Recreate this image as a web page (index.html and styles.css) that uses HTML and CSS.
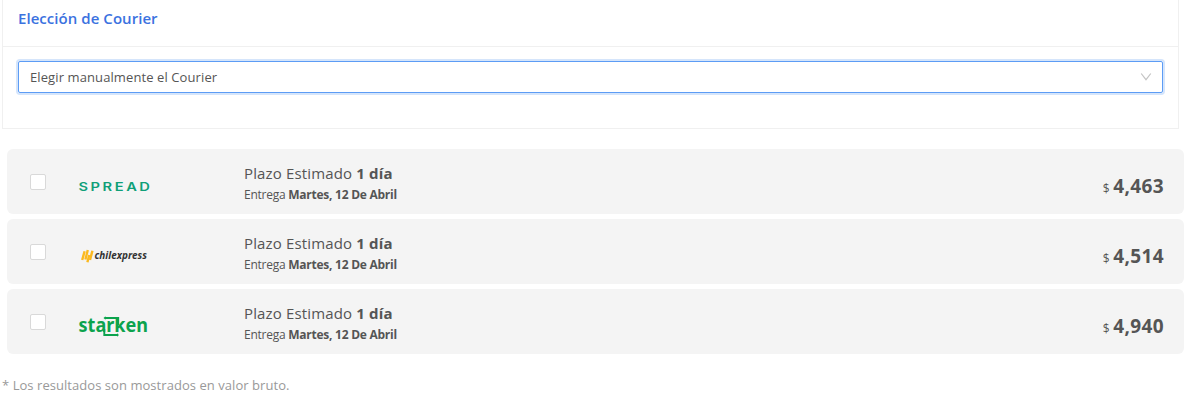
FILE: index.html
```html
<!DOCTYPE html>
<html lang="es">
<head>
    <meta charset="UTF-8">
    <meta name="viewport" content="width=device-width, initial-scale=1.0">
    <title>Elección de Courier</title>
    <link rel="stylesheet" href="styles.css">
</head>
<body>
    <section class="card">
        <h2 class="card-title">Elección de Courier</h2>
        <div class="card-body">
            <div class="select" role="combobox" tabindex="0">
                <span class="select-value">Elegir manualmente el Courier</span>
                <svg class="arrow" width="12" height="10" viewBox="0 0 12 10">
                    <path d="M1.2 1.5 L6 7.7 L10.8 1.5" fill="none" stroke="#c4c4c4" stroke-width="1.2"/>
                </svg>
            </div>
        </div>
    </section>

    <div class="couriers">
        <label class="courier">
            <input type="checkbox" class="check">
            <svg class="logo" width="80" height="30" viewBox="0 0 80 30">
                <text class="logo-spread" x="3.5" y="19.8" textLength="74" lengthAdjust="spacingAndGlyphs">SPREAD</text>
            </svg>
            <div class="info">
                <p class="plazo">Plazo Estimado <b>1 día</b></p>
                <p class="entrega">Entrega <b>Martes, 12 De Abril</b></p>
            </div>
            <div class="price"><small>$</small> <b>4,463</b></div>
        </label>
        <label class="courier">
            <input type="checkbox" class="check">
            <svg class="logo" width="80" height="30" viewBox="0 0 80 30">
                <g fill="none" stroke="#fbb91f" stroke-width="2.4">
                    <path d="M7.2 19 L9.6 10.3"/>
                    <path d="M10.4 18.5 L12.8 9"/>
                    <path d="M12.4 21.3 L14.2 14"/>
                    <path d="M15 19 L17.4 9.8"/>
                </g>
                <text class="logo-chilexpress" x="19.5" y="18.4" textLength="52.5" lengthAdjust="spacingAndGlyphs">chilexpress</text>
            </svg>
            <div class="info">
                <p class="plazo">Plazo Estimado <b>1 día</b></p>
                <p class="entrega">Entrega <b>Martes, 12 De Abril</b></p>
            </div>
            <div class="price"><small>$</small> <b>4,514</b></div>
        </label>
        <label class="courier">
            <input type="checkbox" class="check">
            <svg class="logo" width="80" height="30" viewBox="0 0 80 30">
                <text class="logo-starken" x="3.5" y="20.7" textLength="69.5" lengthAdjust="spacingAndGlyphs">starken</text>
                <path d="M30 7 H43.2 V14 M29.3 18 V24 H43" fill="none" stroke="#0ba34d" stroke-width="1.9"/>
                <path d="M30.5 5.2 L28.5 7 L30.5 8.8 Z M42 22.2 L44 24 L42 25.8 Z" fill="#0ba34d"/>
            </svg>
            <div class="info">
                <p class="plazo">Plazo Estimado <b>1 día</b></p>
                <p class="entrega">Entrega <b>Martes, 12 De Abril</b></p>
            </div>
            <div class="price"><small>$</small> <b>4,940</b></div>
        </label>
    </div>

    <p class="nota">* Los resultados son mostrados en valor bruto.</p>
</body>
</html>
```

FILE: styles.css
```css
* {
    box-sizing: border-box;
}

body {
    margin: 0;
    background-color: #fff;
    color: #555;
    font-family: 'Segoe UI', 'Open Sans', 'Noto Sans', sans-serif;
    font-size: 13px;
    overflow: hidden;
}

p, h2 {
    margin: 0;
}

.card {
    width: 1177px;
    height: 129px;
    margin-left: 2px;
    border: 1px solid #f0f0f0;
    border-top: none;
}

.card-title {
    height: 47px;
    padding: 7px 15px 0;
    border-bottom: 1px solid #f0f0f0;
    color: #3b72e0;
    font-size: 15px;
    font-weight: 600;
    line-height: 22px;
    letter-spacing: 0.05px;
}

.card-body {
    padding: 14px 15px;
}

.select {
    display: flex;
    align-items: center;
    justify-content: space-between;
    height: 32px;
    padding: 0 10px 0 11px;
    border: 1px solid #5c9cf5;
    border-radius: 2px;
    box-shadow: 0 0 0 2px #d5e5fb;
    outline: none;
}

.select-value {
    letter-spacing: 0.1px;
}

.couriers {
    display: flex;
    flex-direction: column;
    gap: 5px;
    width: 1177px;
    margin: 20px 0 0 7px;
}

.courier {
    display: flex;
    align-items: center;
    height: 65px;
    padding: 0 20px 0 23px;
    border-radius: 6px;
    background-color: #f4f4f4;
}

.check {
    appearance: none;
    width: 16px;
    height: 16px;
    margin: 0;
    border: 1px solid #d9d9d9;
    border-radius: 2px;
    background-color: #fff;
}

.logo {
    margin: 8px 89px 0 29px;
}

.logo-spread {
    fill: #0f9f78;
    font: 600 11.5px Inter, sans-serif;
    letter-spacing: 2px;
}

.logo-chilexpress {
    fill: #333;
    font: italic bold 11px 'Open Sans', sans-serif;
}

.logo-starken {
    fill: #0ba34d;
    font: bold 19px 'Noto Sans', sans-serif;
}

.info {
    flex: 1;
    padding-top: 4px;
}

.plazo {
    font-size: 15px;
    line-height: 22px;
    letter-spacing: 0.15px;
}

.entrega {
    font-size: 12px;
    line-height: 21px;
    letter-spacing: -0.25px;
}

.price {
    margin-top: 11px;
    line-height: 30px;
}

.price small {
    font-size: 12px;
}

.price b {
    font-size: 19px;
    letter-spacing: 0.4px;
}

.nota {
    margin: 20px 0 0 2px;
    color: #999;
    line-height: 22px;
    letter-spacing: 0.05px;
}
```
